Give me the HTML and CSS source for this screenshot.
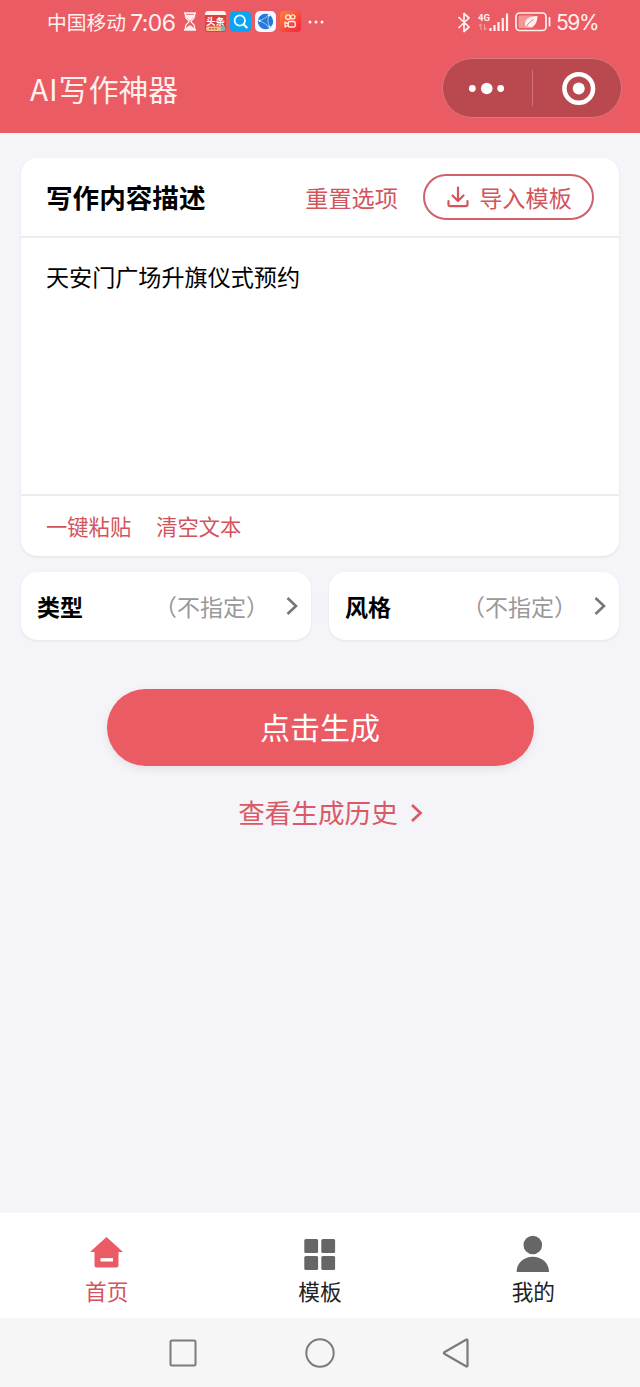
FILE: index.html
```html
<!DOCTYPE html>
<html lang="zh-CN">
<head>
<meta charset="utf-8">
<title>AI写作神器</title>
<link rel="stylesheet" href="styles.css">
</head>
<body>
<div class="screen">
  <header class="header">
    <div class="status">
      <div class="status-left">
        <span class="carrier">中国移动</span>
        <span class="clock">7:06</span>
        <svg class="hourglass" width="14" height="19" viewBox="0 0 14 19"><path d="M1 1.2h12M1 17.8h12" stroke="#fff0ee" stroke-width="2"/><path d="M2.500 2v2.500c0 2.500 3.500 3.500 3.500 5s-3.500 2.500-3.500 5V17h9v-2.500c0-2.500-3.500-3.500-3.500-5s3.500-2.500 3.500-5V2" fill="none" stroke="#fff0ee" stroke-width="1.300"/><path d="M3 3h8v2L7 9 3 5zM3 17c0-2 3-3 4-4 1 1 4 2 4 4z" fill="#fff0ee"/></svg>
        <svg class="app" width="21" height="21" viewBox="0 0 21 21"><rect width="21" height="21" rx="3" fill="#d9413f"/><path d="M0 4V3a3 3 0 0 1 3-3h15a3 3 0 0 1 3 3v1z" fill="#fff0e8"/><text class="app-text" x="10.500" y="13.700" text-anchor="middle">头条</text><rect x="1" y="15.500" width="18" height="4.500" rx="2" fill="#f3c48d"/><path d="M4 17.800h8" stroke="#cf6c42" stroke-width="1.500" stroke-dasharray="2 1"/><circle cx="18" cy="17.500" r="2.500" fill="#79b9b3"/></svg>
        <svg class="app" width="21" height="21" viewBox="0 0 21 21"><rect width="21" height="21" rx="4.500" fill="#0ba4f2"/><circle cx="9.800" cy="9.500" r="5.200" fill="none" stroke="#fff" stroke-width="1.700"/><path d="M13.500 13.300l3.300 3.200" stroke="#fff" stroke-width="1.900" stroke-linecap="round"/></svg>
        <svg class="app" width="21" height="21" viewBox="0 0 21 21"><rect width="21" height="21" rx="5" fill="#f6f8ff"/><circle cx="10.500" cy="10.500" r="7.700" fill="#2479d8"/><path d="M4 9.500C8 9 12 6 13.500 3.500M4 10c4 1 8 3.500 10 6.500M14 4c-1.500 3-1.500 8 .5 12" fill="none" stroke="#b9d8fa" stroke-width=".8"/><circle cx="4.500" cy="9.800" r="1" fill="#fff"/><circle cx="14" cy="4.500" r="1" fill="#fff"/><circle cx="14.500" cy="15.800" r="1" fill="#fff"/></svg>
        <svg class="app" width="21" height="21" viewBox="0 0 21 21"><defs><linearGradient id="warm" x2="1" y2="1"><stop stop-color="#ff852f"/><stop offset=".6" stop-color="#f9443c"/><stop offset="1" stop-color="#f62543"/></linearGradient></defs><rect width="21" height="21" rx="4" fill="url(#warm)"/><g fill="none" stroke="#fff4e8" stroke-width="1.300"><circle cx="8" cy="6.200" r="2.300"/><circle cx="12.800" cy="6" r="2.100"/><rect x="8.200" y="10.500" width="7" height="5.500" rx="1.600"/><path d="M8 12.700L5 11.200v4.600l3-1.500"/></g></svg>
        <svg class="dots" width="16" height="4" viewBox="0 0 16 4" fill="#fff0ee"><circle cx="2" cy="2" r="1.500"/><circle cx="8" cy="2" r="1.500"/><circle cx="14" cy="2" r="1.500"/></svg>
      </div>
      <div class="status-right">
        <svg width="13" height="21" viewBox="0 0 13 21"><path d="M1 5.500l10 9.500-5 4.500V1.500L11 6 1 15.500" fill="none" stroke="#fff0ee" stroke-width="1.700" stroke-linejoin="round" stroke-linecap="round"/></svg>
        <svg class="signal" width="31" height="20" viewBox="0 0 31 20"><text class="net-text" x="0" y="8.500">4G</text><path d="M3 12v6M1 14l2-2M6.500 12v6m2-2l-2 2" stroke="#f59a9b" stroke-width="1.200" fill="none"/><path d="M12.500 16v3M16.500 13v6M20.500 10v9M24.800 6v13M29 1.500V19" stroke="#fff0ee" stroke-width="2.200"/></svg>
        <svg class="battery" width="36" height="20" viewBox="0 0 36 20"><rect x="1" y="1" width="30" height="17.500" rx="3.500" fill="none" stroke="#fff0ee" stroke-width="1.700"/><rect x="3.500" y="3.500" width="15" height="12.500" rx="1.500" fill="#f29698"/><path d="M34.500 6v7.500" stroke="#fff0ee" stroke-width="1.800" stroke-linecap="round"/><path d="M10.500 14.500C8 8 14 4 22.500 4c-.3 8-4 13-10 10.500l-2.500 2z" fill="#fff0ee"/><path d="M10.500 15.500C13 11.500 16 9 18.500 7.500" stroke="#ec7075" stroke-width="1" fill="none"/></svg>
        <span class="percent">59%</span>
      </div>
    </div>
    <div class="titlebar">
      <h1 class="title"><span class="title-latin">AI</span>写作神器</h1>
      <div class="capsule">
        <svg class="capsule-half" width="89" height="58" viewBox="0 0 89 58" fill="#fff"><circle cx="29.500" cy="29.500" r="3.400"/><circle cx="44" cy="29.500" r="5.800"/><circle cx="58" cy="29.500" r="3.400"/></svg>
        <span class="capsule-line"></span>
        <svg class="capsule-half" width="89" height="58" viewBox="0 0 89 58"><circle cx="46" cy="29.500" r="14.400" fill="none" stroke="#fff" stroke-width="4.600"/><circle cx="46" cy="29.500" r="6" fill="#fff"/></svg>
      </div>
    </div>
  </header>

  <main class="content">
    <section class="card">
      <div class="card-head">
        <h2 class="card-title">写作内容描述</h2>
        <span class="reset">重置选项</span>
        <span class="import">
          <svg width="22" height="22" viewBox="0 0 22 22" fill="none" stroke="#d3545c" stroke-width="2.200" stroke-linecap="round" stroke-linejoin="round"><path d="M11 1.500v13M5.500 9.500l5.500 5.500 5.500-5.500M1.500 15v3.500c0 1.200.5 1.700 1.700 1.700h15.600c1.200 0 1.700-.5 1.700-1.700V15"/></svg>
          <span class="import-text">导入模板</span>
        </span>
      </div>
      <div class="card-body">天安门广场升旗仪式预约</div>
      <div class="card-foot"><span>一键粘贴</span><span>清空文本</span></div>
    </section>
    <div class="options">
      <div class="option"><b class="option-name">类型</b><span class="option-value">（不指定）</span><svg width="12" height="20" viewBox="0 0 12 20"><path d="M1.500 2l8.500 8-8.500 8" fill="none" stroke="#777" stroke-width="2.600"/></svg></div>
      <div class="option"><b class="option-name">风格</b><span class="option-value">（不指定）</span><svg width="12" height="20" viewBox="0 0 12 20"><path d="M1.500 2l8.500 8-8.500 8" fill="none" stroke="#777" stroke-width="2.600"/></svg></div>
    </div>
    <div class="generate">点击生成</div>
    <div class="history"><span class="history-text">查看生成历史</span><svg width="13" height="20" viewBox="0 0 13 20"><path d="M2 2l8.500 8L2 18" fill="none" stroke="#d95964" stroke-width="2.700"/></svg></div>
  </main>

  <nav class="tabs">
    <div class="tab tab-active"><svg width="36" height="38" viewBox="0 0 36 38"><path d="M17.500 3L34 18h-4.500v13.500a2 2 0 0 1-2 2h-20a2 2 0 0 1-2-2V18H1z" fill="#eb5b66"/><path d="M11.500 25.800H24" stroke="#fff" stroke-width="3.400"/></svg><span>首页</span></div>
    <div class="tab"><svg width="36" height="38" viewBox="0 0 36 38" fill="#666"><rect x="2.300" y="5" width="13.800" height="14" rx="1.500"/><rect x="19.300" y="5" width="13.800" height="14" rx="1.500"/><rect x="2.300" y="22" width="13.800" height="14" rx="1.500"/><rect x="19.300" y="22" width="13.800" height="14" rx="1.500"/></svg><span>模板</span></div>
    <div class="tab"><svg width="36" height="38" viewBox="0 0 36 38" fill="#666"><circle cx="17.800" cy="11" r="9.300"/><path d="M1.600 38c0-9 7-15.300 16.200-15.300S34 29 34 38z"/></svg><span>我的</span></div>
  </nav>
  <div class="sysnav">
    <svg width="32" height="32" viewBox="0 0 32 32" fill="none" stroke="#7b7b7b" stroke-width="2"><rect x="3.500" y="3.500" width="25" height="25" rx="1.500"/></svg>
    <svg width="32" height="32" viewBox="0 0 32 32" fill="none" stroke="#7b7b7b" stroke-width="2"><circle cx="16" cy="16" r="13.700"/></svg>
    <svg width="32" height="32" viewBox="0 0 32 32" fill="none" stroke="#7b7b7b" stroke-width="2.200" stroke-linejoin="round"><path d="M3.300 15.200Q2.500 16 3.300 16.800L25 29.300Q26.500 30 26.500 28.500V3.500Q26.500 2 25 2.700z"/></svg>
  </div>
</div>
</body>
</html>
```
FILE: styles.css
```css
* { box-sizing: border-box; }
body { margin: 0; font-family: "Noto Sans CJK SC", sans-serif; background: #f4f4f9; }
svg { display: block; flex: none; }
.screen { width: 640px; height: 1387px; display: flex; flex-direction: column; overflow: hidden; white-space: nowrap; }

.header { height: 133px; background: #eb5b64; color: #fff0ee; flex: none; }
.status { height: 44px; display: flex; justify-content: space-between; padding: 0 43px 0 47px; }
.status-left, .status-right { display: flex; align-items: center; }
.status-left { padding-bottom: 1px; }
.carrier { font-size: 19.8px; line-height: 44px; }
.clock { font-family: Inter, sans-serif; font-size: 23px; width: 46px; margin-left: 4px; letter-spacing: -0.6px; line-height: 44px; padding-top: 2px; }
.hourglass { margin-left: 7px; }
.app { margin-left: 4px; }
.hourglass + .app { margin-left: 8px; }
.app-text { font-size: 9.5px; font-weight: 700; fill: #fff; }
.dots { margin-left: 7px; }
.signal { margin-left: 7px; }
.net-text { font-family: Roboto, sans-serif; font-size: 9.5px; font-weight: 700; fill: #fff0ee; }
.battery { margin-left: 6px; }
.percent { width: 41px; margin-left: 5px; padding-top: 1px; font-family: Inter, sans-serif; font-size: 21px; letter-spacing: -1.4px; line-height: 44px; }
.titlebar { height: 89px; display: flex; justify-content: space-between; padding: 14px 18px 0 30px; }
.title { margin: 0; font-size: 29.8px; font-weight: 400; line-height: 60px; }
.title-latin { letter-spacing: 1px; }
.capsule { width: 180px; height: 60px; display: flex; align-items: center; border: 1px solid #da777d; border-radius: 30px; background: #b9484f; }
.capsule-line { width: 1px; height: 36px; background: #d0747a; }
.capsule-half { width: 88.500px; }

.content { flex: 1; padding: 25px 21px 0; }
.card { height: 398px; border-radius: 16px; background: #fff; box-shadow: 0 1px 3px rgba(0, 0, 0, .08); }
.card-head { height: 80px; display: flex; align-items: center; padding: 0 25px; border-bottom: 2px solid #ededef; }
.card-title { margin: 0 auto 0 0; font-size: 26.6px; font-weight: 700; line-height: 40px; color: #000; }
.reset { padding-bottom: 1px; font-size: 23.2px; color: #d3545c; }
.import { width: 171px; height: 46px; margin-left: 25px; padding-left: 2px; display: flex; align-items: center; justify-content: center; gap: 10px; border: 2px solid #d0606a; border-radius: 23px; font-size: 23.2px; color: #d3545c; }
.import-text { padding-bottom: 1px; }
.card-body { height: 256px; padding: 20px 25px; font-size: 23.100px; line-height: 36px; color: #000; }
.card-foot { height: 62px; display: flex; align-items: center; gap: 25px; padding: 0 25px 1px; border-top: 2px solid #ededef; font-size: 21.3px; color: #d3545c; }
.options { display: flex; gap: 18px; margin-top: 16px; }
.option { flex: 1; height: 68px; display: flex; align-items: center; padding: 0 13px 0 16px; border-radius: 16px; background: #fff; box-shadow: 0 1px 3px rgba(0, 0, 0, .08); font-size: 23px; }
.option-name { margin-right: auto; color: #000; }
.option-value { margin-right: 17px; color: #999; }
.generate { width: 427px; height: 77px; margin: 49px auto 0; border-radius: 39px; background: #eb5b64; box-shadow: 0 3px 10px rgba(0, 0, 0, .08); color: #fff; font-size: 30px; line-height: 74px; text-align: center; }
.history { display: flex; align-items: center; justify-content: center; gap: 12px; height: 40px; margin: 27px 0 0 21px; font-size: 26.6px; color: #d95964; }
.history-text { padding-bottom: 3px; }

.tabs { height: 105px; flex: none; display: flex; background: #fff; }
.tab { flex: 1; display: flex; flex-direction: column; align-items: center; padding-top: 21px; font-size: 21.7px; line-height: 30px; color: #222; }
.tab span { margin-top: 4px; }
.tab-active { color: #d3545c; }
.sysnav { height: 69px; flex: none; display: flex; justify-content: center; gap: 105px; padding-top: 19px; background: #f6f6f6; }
```
